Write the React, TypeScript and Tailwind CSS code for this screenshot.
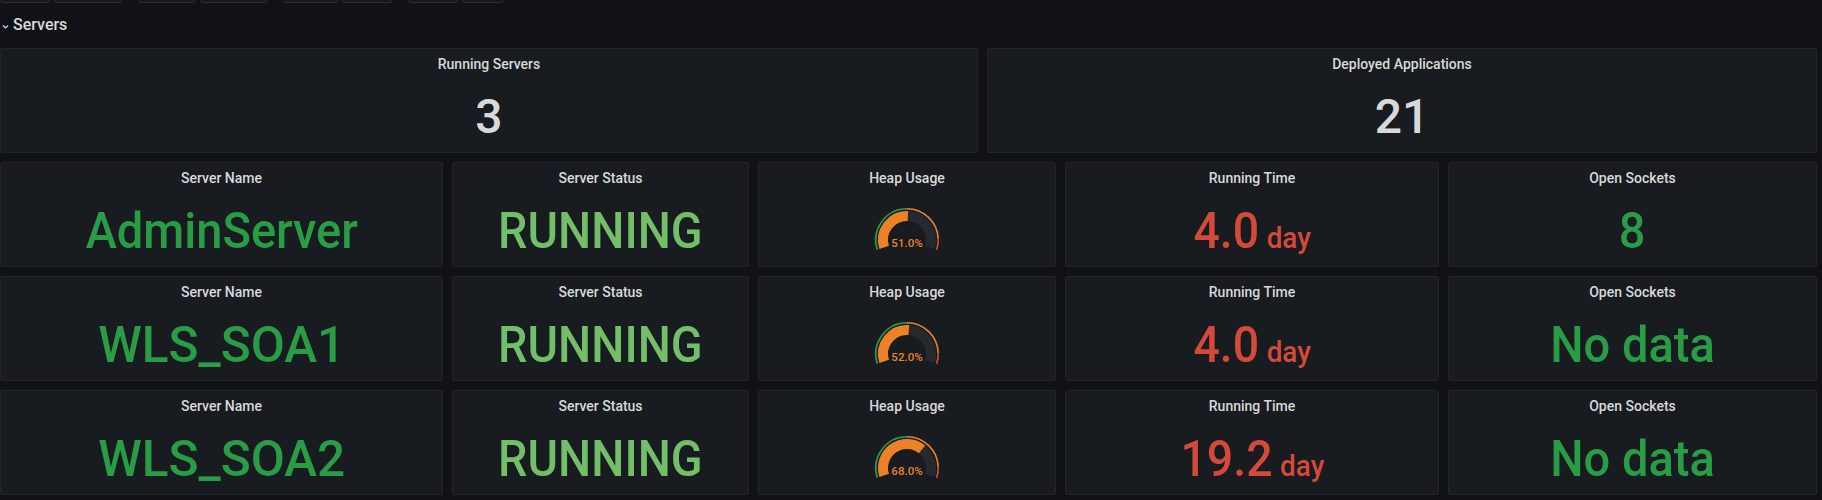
import React from "react";

const GREEN = "#299c46";
const LIGHT_GREEN = "#73bf69";
const RED = "#d44a3a";
const ORANGE = "#ed8128";

function polar(cx: number, cy: number, r: number, deg: number) {
  const a = (deg * Math.PI) / 180;
  return { x: cx + r * Math.sin(a), y: cy - r * Math.cos(a) };
}

function arc(cx: number, cy: number, r: number, a0: number, a1: number) {
  const p0 = polar(cx, cy, r, a0);
  const p1 = polar(cx, cy, r, a1);
  const large = a1 - a0 > 180 ? 1 : 0;
  return `M ${p0.x} ${p0.y} A ${r} ${r} 0 ${large} 1 ${p1.x} ${p1.y}`;
}

const START = -108;
const SWEEP = 216;
const ang = (p: number) => START + (SWEEP * p) / 100;

function Gauge({ value }: { value: number }) {
  const cx = 36;
  const cy = 34;
  return (
    <svg width="72" height="50" viewBox="0 0 72 50">
      <path d={arc(cx, cy, 31.2, ang(0), ang(50))} stroke="#299c46" strokeWidth="1.6" fill="none" />
      <path d={arc(cx, cy, 31.2, ang(50), ang(91))} stroke={ORANGE} strokeWidth="1.6" fill="none" />
      <path d={arc(cx, cy, 31.2, ang(91), ang(100))} stroke={RED} strokeWidth="1.6" fill="none" />
      <path d={arc(cx, cy, 24, ang(0), ang(100))} stroke="#26292f" strokeWidth="10" fill="none" />
      <path d={arc(cx, cy, 24, ang(0), ang(value))} stroke={ORANGE} strokeWidth="10" fill="none" />
      <text
        x={cx}
        y={cy + 3.5}
        textAnchor="middle"
        dominantBaseline="middle"
        fill={ORANGE}
        fontSize="11.5"
        fontWeight="500"
        fontFamily="Roboto, sans-serif"
      >
        {value.toFixed(1)}%
      </text>
    </svg>
  );
}

function Panel({ title, children }: { title: string; children: React.ReactNode }) {
  return (
    <div className="h-[105px] bg-[#181b1f] border border-[#23252b] rounded-[2px] flex flex-col items-center overflow-hidden">
      <div className="pt-[7px] h-[24px] text-[14px] leading-[16px] font-medium text-[#d8d9da] whitespace-nowrap">
        {title}
      </div>
      {children}
    </div>
  );
}

function BigValue({
  children,
  color,
  cls = "text-[50px]",
}: {
  children: React.ReactNode;
  color: string;
  cls?: string;
}) {
  return (
    <div
      className={`mt-[19px] h-[50px] leading-[50px] font-medium flex items-baseline justify-center whitespace-nowrap ${cls}`}
      style={{ color }}
    >
      {children}
    </div>
  );
}

const rows = [
  { name: "AdminServer", nameCls: "text-[50px] scale-x-[0.94]", heap: 51, time: "4.0", sockets: "8" },
  { name: "WLS_SOA1", nameCls: "text-[50px] scale-x-[0.99]", heap: 52, time: "4.0", sockets: "No data" },
  { name: "WLS_SOA2", nameCls: "text-[50px] scale-x-[0.99]", heap: 68, time: "19.2", sockets: "No data" },
];

export default function App() {
  return (
    <div className="w-[1822px] h-[500px] bg-[#111217] overflow-hidden font-['Roboto',_sans-serif]">
      <div className="flex h-[3px]">
        <div className="w-[50px] border-x border-b border-[#2c2e33] rounded-b-[2px] bg-[#16181d]" />
        <div className="ml-[5px] w-[67px] border-x border-b border-[#2c2e33] rounded-b-[2px] bg-[#16181d]" />
        <div className="ml-[17px] w-[56px] border-x border-b border-[#2c2e33] rounded-b-[2px] bg-[#16181d]" />
        <div className="ml-[5px] w-[67px] border-x border-b border-[#2c2e33] rounded-b-[2px] bg-[#16181d]" />
        <div className="ml-[17px] w-[54px] border-x border-b border-[#2c2e33] rounded-b-[2px] bg-[#16181d]" />
        <div className="ml-[4px] w-[50px] border-x border-b border-[#2c2e33] rounded-b-[2px] bg-[#16181d]" />
        <div className="ml-[16px] w-[50px] border-x border-b border-[#2c2e33] rounded-b-[2px] bg-[#16181d]" />
        <div className="ml-[5px] w-[40px] border-x border-b border-[#2c2e33] rounded-b-[2px] bg-[#16181d]" />
      </div>
      <div className="h-[42px] flex items-center pt-[2px] pl-[2px] gap-[4px] text-[#d8d9da]">
        <svg width="7" height="6" viewBox="0 0 7 6" className="mt-[3px]">
          <path d="M1 1.5 L3.5 4 L6 1.5" stroke="#d8d9da" strokeWidth="1.2" fill="none" />
        </svg>
        <span className="text-[16px] font-medium leading-[20px]">Servers</span>
      </div>
      <div className="mt-[3px] w-[1817px] flex flex-col gap-[9px]">
        <div className="grid grid-cols-[978px_1fr] gap-[9px]">
          <Panel title="Running Servers">
            <BigValue color="#d8d9da" cls="text-[48px]">3</BigValue>
          </Panel>
          <Panel title="Deployed Applications">
            <BigValue color="#d8d9da" cls="text-[48px]">21</BigValue>
          </Panel>
        </div>
        {rows.map((r) => (
          <div key={r.name} className="grid grid-cols-[443px_297px_298px_374px_1fr] gap-[9px]">
            <Panel title="Server Name">
              <BigValue color={GREEN} cls={r.nameCls}>{r.name}</BigValue>
            </Panel>
            <Panel title="Server Status">
              <BigValue color={LIGHT_GREEN} cls="text-[50px] scale-x-[0.935]">RUNNING</BigValue>
            </Panel>
            <Panel title="Heap Usage">
              <div className="mt-[19px]">
                <Gauge value={r.heap} />
              </div>
            </Panel>
            <Panel title="Running Time">
              <BigValue color={RED} cls="text-[50px] scale-x-[0.93]">
                <span>{r.time}</span>
                <span className="ml-[8px] text-[30px]">day</span>
              </BigValue>
            </Panel>
            <Panel title="Open Sockets">
              <BigValue color={GREEN} cls="text-[50px] scale-x-[0.94]">
                {r.sockets}
              </BigValue>
            </Panel>
          </div>
        ))}
      </div>
    </div>
  );
}
